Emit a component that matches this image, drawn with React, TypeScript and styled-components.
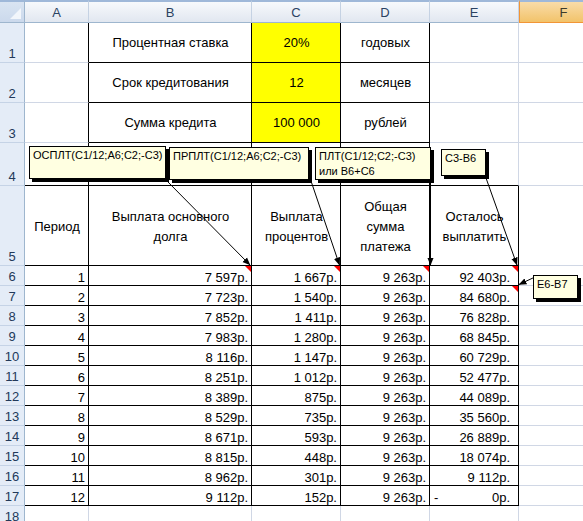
import React from "react";
import styled, { createGlobalStyle, css } from "styled-components";

const Global = createGlobalStyle`
  html, body { margin: 0; padding: 0; background: #fff; }
  body { font-family: "Liberation Sans", Arial, sans-serif; }
`;

const GRID = "#d0d7e5";
const BLACK = "#000";

const Sheet = styled.div`
  position: relative;
  width: 583px;
  height: 521px;
  overflow: hidden;
  background: #fff;
  font-family: "Liberation Sans", Arial, sans-serif;
  font-size: 13px;
  color: #000;
`;

const Grid = styled.div`
  display: grid;
  grid-template-columns: 25px 64px 163px 89px 89px 89px 89px;
  grid-template-rows: 23px 40px 40px 40px 43px 80px repeat(13, 20px);
`;

const Corner = styled.div`
  position: relative;
  box-sizing: border-box;
  border-top: 2px solid #9fb8d9;
  border-right: 1px solid #9eb6ce;
  border-bottom: 1px solid #9eb6ce;
  background: linear-gradient(#d9e4f2, #cbd9ec);
  &::after {
    content: "";
    position: absolute;
    right: 3px;
    bottom: 3px;
    border-left: 11px solid transparent;
    border-bottom: 11px solid #f2f6fb;
  }
`;

const ColHeader = styled.div<{ $active?: boolean }>`
  box-sizing: border-box;
  border-top: 2px solid #9fb8d9;
  border-right: 1px solid #c5d2e3;
  border-bottom: 1px solid #9eb6ce;
  background: linear-gradient(#f7f9fc, #e1e7f0);
  color: #2b4262;
  text-align: center;
  padding-top: 3px;
  line-height: 16px;
  ${(p) =>
    p.$active &&
    css`
      background: linear-gradient(#f9dca9, #f2c36a);
      border-left: 1px solid #f29536;
      border-right: 1px solid #f29536;
      border-bottom: 1px solid #f29536;
      color: #3d3a2a;
    `}
`;

const RowHeader = styled.div`
  box-sizing: border-box;
  border-right: 1px solid #9eb6ce;
  border-bottom: 1px solid #c5d3e6;
  background: #e4ecf7;
  color: #22395a;
  display: flex;
  align-items: flex-end;
  justify-content: center;
  line-height: 15px;
  padding-bottom: 1px;
`;

type CellProps = {
  $r?: boolean;
  $b?: boolean;
  $bg?: string;
  $h?: "left" | "center" | "right" | "between";
  $v?: "center" | "bottom";
  $pr?: number;
  $note?: boolean;
};

const justify = (h?: string) =>
  h === "center"
    ? "center"
    : h === "right"
    ? "flex-end"
    : h === "between"
    ? "space-between"
    : "flex-start";

const Cell = styled.div<CellProps>`
  position: relative;
  box-sizing: border-box;
  border-right: 1px solid ${(p) => (p.$r ? BLACK : GRID)};
  border-bottom: 1px solid ${(p) => (p.$b ? BLACK : GRID)};
  background: ${(p) => p.$bg ?? "#fff"};
  display: flex;
  align-items: ${(p) => (p.$v === "center" ? "center" : "flex-end")};
  justify-content: ${(p) => justify(p.$h)};
  padding: 0 ${(p) => p.$pr ?? 3}px 0 4px;
  line-height: 15px;
  white-space: nowrap;
  ${(p) =>
    p.$note &&
    css`
      &::after {
        content: "";
        position: absolute;
        top: 0;
        right: 0;
        border-left: 6px solid transparent;
        border-top: 6px solid #ff0000;
      }
    `}
`;

const HeadCell = styled(Cell)`
  text-align: center;
  line-height: 20px;
  padding-top: 3px;
  white-space: normal;
`;

const Note = styled.div<{ $x: number; $y: number; $w: number; $h: number }>`
  position: absolute;
  left: ${(p) => p.$x}px;
  top: ${(p) => p.$y}px;
  width: ${(p) => p.$w}px;
  height: ${(p) => p.$h}px;
  box-sizing: border-box;
  background: #ffffe1;
  border: 1px solid #000;
  box-shadow: 3px 3px 0 #000;
  font-size: 11px;
  line-height: 15px;
  padding: 1px 3px 0 3px;
  white-space: nowrap;
  color: #000;
`;

const Arrows = styled.svg`
  position: absolute;
  left: 0;
  top: 0;
  pointer-events: none;
`;

const letters = ["A", "B", "C", "D", "E", "F"];

const params = [
  ["Процентная ставка", "20%", "годовых"],
  ["Срок кредитования", "12", "месяцев"],
  ["Сумма кредита", "100 000", "рублей"],
];

const payments = [
  ["1", "7 597р.", "1 667р.", "9 263р.", "92 403р."],
  ["2", "7 723р.", "1 540р.", "9 263р.", "84 680р."],
  ["3", "7 852р.", "1 411р.", "9 263р.", "76 828р."],
  ["4", "7 983р.", "1 280р.", "9 263р.", "68 845р."],
  ["5", "8 116р.", "1 147р.", "9 263р.", "60 729р."],
  ["6", "8 251р.", "1 012р.", "9 263р.", "52 477р."],
  ["7", "8 389р.", "875р.", "9 263р.", "44 089р."],
  ["8", "8 529р.", "735р.", "9 263р.", "35 560р."],
  ["9", "8 671р.", "593р.", "9 263р.", "26 889р."],
  ["10", "8 815р.", "448р.", "9 263р.", "18 074р."],
  ["11", "8 962р.", "301р.", "9 263р.", "9 112р."],
  ["12", "9 112р.", "152р.", "9 263р.", "0р."],
];

export default function App() {
  return (
    <>
      <Global />
      <Sheet>
        <Grid>
          <Corner />
          {letters.map((l) => (
            <ColHeader key={l} $active={l === "F"}>
              {l}
            </ColHeader>
          ))}

          {params.map(([label, value, unit], i) => (
            <React.Fragment key={label}>
              <RowHeader>{i + 1}</RowHeader>
              <Cell $r />
              <Cell $r $b $h="center" $v="center">
                {label}
              </Cell>
              <Cell $r $b $h="center" $v="center" $bg="#ffff00">
                {value}
              </Cell>
              <Cell $r $b $h="center" $v="center">
                {unit}
              </Cell>
              <Cell />
              <Cell />
            </React.Fragment>
          ))}

          <RowHeader>4</RowHeader>
          <Cell $r $b />
          <Cell $r $b />
          <Cell $r $b />
          <Cell $r $b />
          <Cell $b />
          <Cell />

          <RowHeader>5</RowHeader>
          <HeadCell $r $b $h="center" $v="center">
            Период
          </HeadCell>
          <HeadCell $r $b $h="center" $v="center">
            <span>
              Выплата основного
              <br />
              долга
            </span>
          </HeadCell>
          <HeadCell $r $b $h="center" $v="center">
            <span>
              Выплата
              <br />
              процентов
            </span>
          </HeadCell>
          <HeadCell $r $b $h="center" $v="center">
            <span>
              Общая
              <br />
              сумма
              <br />
              платежа
            </span>
          </HeadCell>
          <HeadCell $r $b $h="center" $v="center">
            <span>
              Осталось
              <br />
              выплатить
            </span>
          </HeadCell>
          <Cell />

          {payments.map(([n, main, pct, total, rest], i) => (
            <React.Fragment key={n}>
              <RowHeader>{i + 6}</RowHeader>
              <Cell $r $b $h="right">
                {n}
              </Cell>
              <Cell $r $b $h="right" $note={i === 0}>
                {main}
              </Cell>
              <Cell $r $b $h="right" $note={i === 0}>
                {pct}
              </Cell>
              <Cell $r $b $h="right" $note={i === 0}>
                {total}
              </Cell>
              {i === payments.length - 1 ? (
                <Cell $r $b $h="between" $pr={8}>
                  <span>-</span>
                  <span>{rest}</span>
                </Cell>
              ) : (
                <Cell $r $b $h="right" $pr={8} $note={i < 2}>
                  {rest}
                </Cell>
              )}
              <Cell />
            </React.Fragment>
          ))}

          <RowHeader>18</RowHeader>
          <Cell />
          <Cell />
          <Cell />
          <Cell />
          <Cell />
          <Cell />
        </Grid>

        <Arrows width="583" height="521" viewBox="0 0 583 521">
          <defs>
            <marker
              id="ah"
              markerWidth="8"
              markerHeight="8"
              refX="7.5"
              refY="4"
              orient="auto"
              markerUnits="userSpaceOnUse"
            >
              <path d="M0,0.8 L8,4 L0,7.2 z" fill="#000" />
            </marker>
          </defs>
          <g stroke="#000" strokeWidth="1" fill="none">
            <line x1="167" y1="181" x2="250" y2="265" markerEnd="url(#ah)" />
            <line x1="311" y1="181" x2="339.5" y2="265" markerEnd="url(#ah)" />
            <line x1="430.5" y1="179" x2="430.5" y2="265" markerEnd="url(#ah)" />
            <line x1="486" y1="178" x2="517" y2="265" markerEnd="url(#ah)" />
            <line x1="535" y1="277" x2="519" y2="284.5" markerEnd="url(#ah)" />
          </g>
        </Arrows>

        <Note $x={29} $y={146} $w={137} $h={33}>
          ОСПЛТ(C1/12;A6;C2;-C3)
        </Note>
        <Note $x={169} $y={147} $w={140} $h={33}>
          ПРПЛТ(C1/12;A6;C2;-C3)
        </Note>
        <Note $x={315} $y={147} $w={116} $h={33}>
          ПЛТ(C1/12;C2;-C3)
          <br />
          или B6+C6
        </Note>
        <Note $x={441} $y={149} $w={45} $h={27}>
          C3-B6
        </Note>
        <Note $x={533} $y={275} $w={45} $h={24}>
          E6-B7
        </Note>
      </Sheet>
    </>
  );
}
